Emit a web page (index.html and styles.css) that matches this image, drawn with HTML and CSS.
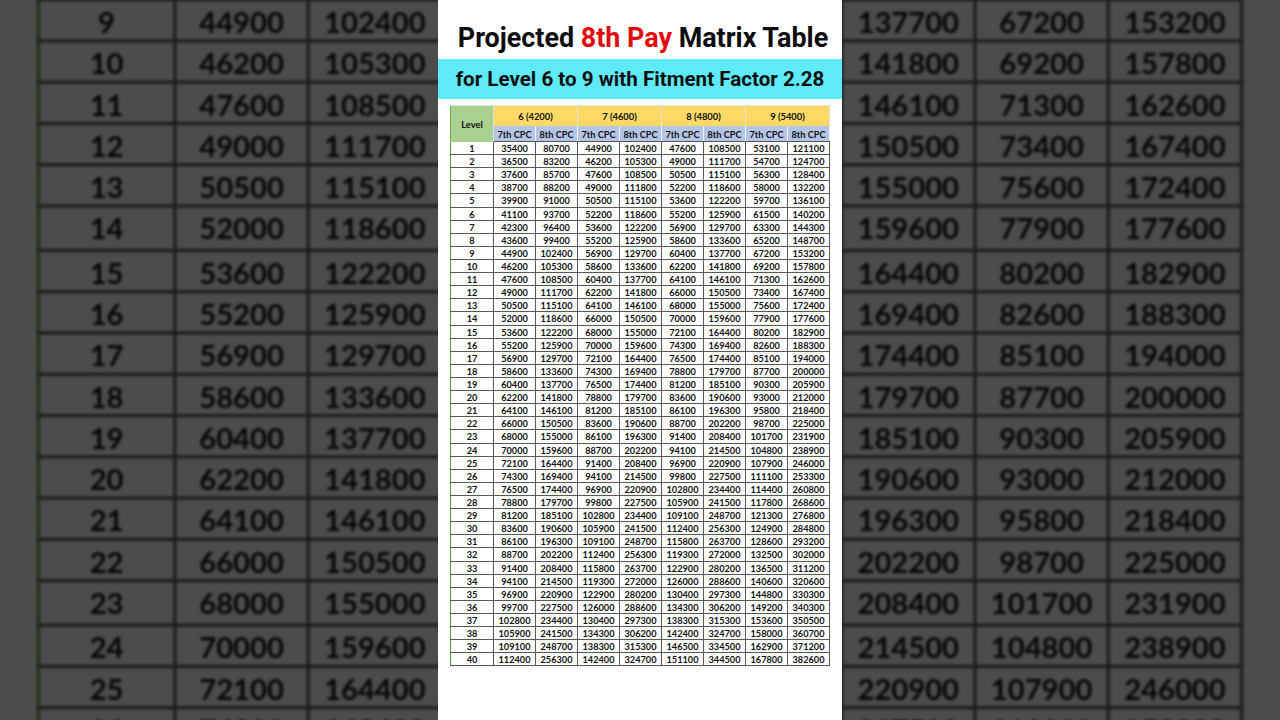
FILE: index.html
```html
<!DOCTYPE html>
<html lang="en">
<head>
<meta charset="utf-8">
<title>Projected 8th Pay Matrix Table</title>
<link rel="stylesheet" href="styles.css">
</head>
<body>
<div class="backdrop" aria-hidden="true"></div>
<main class="panel">
  <h1 class="title">Projected <span class="accent">8th Pay</span> Matrix Table</h1>
  <p class="band">for Level 6 to 9 with Fitment Factor 2.28</p>
  <table class="matrix">
    <colgroup><col class="c-level"><col><col><col><col><col><col><col><col></colgroup>
    <thead>
      <tr class="h1">
        <th rowspan="2" class="lvl-head">Level</th>
        <th colspan="2">6 (4200)</th>
        <th colspan="2">7 (4600)</th>
        <th colspan="2">8 (4800)</th>
        <th colspan="2">9 (5400)</th>
      </tr>
      <tr class="h2">
        <th>7th CPC</th><th>8th CPC</th>
        <th>7th CPC</th><th>8th CPC</th>
        <th>7th CPC</th><th>8th CPC</th>
        <th>7th CPC</th><th>8th CPC</th>
      </tr>
    </thead>
    <tbody>
      <tr><td>1</td><td>35400</td><td>80700</td><td>44900</td><td>102400</td><td>47600</td><td>108500</td><td>53100</td><td>121100</td></tr>
      <tr><td>2</td><td>36500</td><td>83200</td><td>46200</td><td>105300</td><td>49000</td><td>111700</td><td>54700</td><td>124700</td></tr>
      <tr><td>3</td><td>37600</td><td>85700</td><td>47600</td><td>108500</td><td>50500</td><td>115100</td><td>56300</td><td>128400</td></tr>
      <tr><td>4</td><td>38700</td><td>88200</td><td>49000</td><td>111800</td><td>52200</td><td>118600</td><td>58000</td><td>132200</td></tr>
      <tr><td>5</td><td>39900</td><td>91000</td><td>50500</td><td>115100</td><td>53600</td><td>122200</td><td>59700</td><td>136100</td></tr>
      <tr><td>6</td><td>41100</td><td>93700</td><td>52200</td><td>118600</td><td>55200</td><td>125900</td><td>61500</td><td>140200</td></tr>
      <tr><td>7</td><td>42300</td><td>96400</td><td>53600</td><td>122200</td><td>56900</td><td>129700</td><td>63300</td><td>144300</td></tr>
      <tr><td>8</td><td>43600</td><td>99400</td><td>55200</td><td>125900</td><td>58600</td><td>133600</td><td>65200</td><td>148700</td></tr>
      <tr><td>9</td><td>44900</td><td>102400</td><td>56900</td><td>129700</td><td>60400</td><td>137700</td><td>67200</td><td>153200</td></tr>
      <tr><td>10</td><td>46200</td><td>105300</td><td>58600</td><td>133600</td><td>62200</td><td>141800</td><td>69200</td><td>157800</td></tr>
      <tr><td>11</td><td>47600</td><td>108500</td><td>60400</td><td>137700</td><td>64100</td><td>146100</td><td>71300</td><td>162600</td></tr>
      <tr><td>12</td><td>49000</td><td>111700</td><td>62200</td><td>141800</td><td>66000</td><td>150500</td><td>73400</td><td>167400</td></tr>
      <tr><td>13</td><td>50500</td><td>115100</td><td>64100</td><td>146100</td><td>68000</td><td>155000</td><td>75600</td><td>172400</td></tr>
      <tr><td>14</td><td>52000</td><td>118600</td><td>66000</td><td>150500</td><td>70000</td><td>159600</td><td>77900</td><td>177600</td></tr>
      <tr><td>15</td><td>53600</td><td>122200</td><td>68000</td><td>155000</td><td>72100</td><td>164400</td><td>80200</td><td>182900</td></tr>
      <tr><td>16</td><td>55200</td><td>125900</td><td>70000</td><td>159600</td><td>74300</td><td>169400</td><td>82600</td><td>188300</td></tr>
      <tr><td>17</td><td>56900</td><td>129700</td><td>72100</td><td>164400</td><td>76500</td><td>174400</td><td>85100</td><td>194000</td></tr>
      <tr><td>18</td><td>58600</td><td>133600</td><td>74300</td><td>169400</td><td>78800</td><td>179700</td><td>87700</td><td>200000</td></tr>
      <tr><td>19</td><td>60400</td><td>137700</td><td>76500</td><td>174400</td><td>81200</td><td>185100</td><td>90300</td><td>205900</td></tr>
      <tr><td>20</td><td>62200</td><td>141800</td><td>78800</td><td>179700</td><td>83600</td><td>190600</td><td>93000</td><td>212000</td></tr>
      <tr><td>21</td><td>64100</td><td>146100</td><td>81200</td><td>185100</td><td>86100</td><td>196300</td><td>95800</td><td>218400</td></tr>
      <tr><td>22</td><td>66000</td><td>150500</td><td>83600</td><td>190600</td><td>88700</td><td>202200</td><td>98700</td><td>225000</td></tr>
      <tr><td>23</td><td>68000</td><td>155000</td><td>86100</td><td>196300</td><td>91400</td><td>208400</td><td>101700</td><td>231900</td></tr>
      <tr><td>24</td><td>70000</td><td>159600</td><td>88700</td><td>202200</td><td>94100</td><td>214500</td><td>104800</td><td>238900</td></tr>
      <tr><td>25</td><td>72100</td><td>164400</td><td>91400</td><td>208400</td><td>96900</td><td>220900</td><td>107900</td><td>246000</td></tr>
      <tr><td>26</td><td>74300</td><td>169400</td><td>94100</td><td>214500</td><td>99800</td><td>227500</td><td>111100</td><td>253300</td></tr>
      <tr><td>27</td><td>76500</td><td>174400</td><td>96900</td><td>220900</td><td>102800</td><td>234400</td><td>114400</td><td>260800</td></tr>
      <tr><td>28</td><td>78800</td><td>179700</td><td>99800</td><td>227500</td><td>105900</td><td>241500</td><td>117800</td><td>268600</td></tr>
      <tr><td>29</td><td>81200</td><td>185100</td><td>102800</td><td>234400</td><td>109100</td><td>248700</td><td>121300</td><td>276800</td></tr>
      <tr><td>30</td><td>83600</td><td>190600</td><td>105900</td><td>241500</td><td>112400</td><td>256300</td><td>124900</td><td>284800</td></tr>
      <tr><td>31</td><td>86100</td><td>196300</td><td>109100</td><td>248700</td><td>115800</td><td>263700</td><td>128600</td><td>293200</td></tr>
      <tr><td>32</td><td>88700</td><td>202200</td><td>112400</td><td>256300</td><td>119300</td><td>272000</td><td>132500</td><td>302000</td></tr>
      <tr><td>33</td><td>91400</td><td>208400</td><td>115800</td><td>263700</td><td>122900</td><td>280200</td><td>136500</td><td>311200</td></tr>
      <tr><td>34</td><td>94100</td><td>214500</td><td>119300</td><td>272000</td><td>126000</td><td>288600</td><td>140600</td><td>320600</td></tr>
      <tr><td>35</td><td>96900</td><td>220900</td><td>122900</td><td>280200</td><td>130400</td><td>297300</td><td>144800</td><td>330300</td></tr>
      <tr><td>36</td><td>99700</td><td>227500</td><td>126000</td><td>288600</td><td>134300</td><td>306200</td><td>149200</td><td>340300</td></tr>
      <tr><td>37</td><td>102800</td><td>234400</td><td>130400</td><td>297300</td><td>138300</td><td>315300</td><td>153600</td><td>350500</td></tr>
      <tr><td>38</td><td>105900</td><td>241500</td><td>134300</td><td>306200</td><td>142400</td><td>324700</td><td>158000</td><td>360700</td></tr>
      <tr><td>39</td><td>109100</td><td>248700</td><td>138300</td><td>315300</td><td>146500</td><td>334500</td><td>162900</td><td>371200</td></tr>
      <tr><td>40</td><td>112400</td><td>256300</td><td>142400</td><td>324700</td><td>151100</td><td>344500</td><td>167800</td><td>382600</td></tr>
    </tbody>
  </table>
</main>
<script src="script.js"></script>
</body>
</html>
```

FILE: styles.css
```css
* { box-sizing: border-box; }

html, body {
  margin: 0;
  height: 720px;
  overflow: hidden;
}

body {
  background: #4b4b4b;
  display: flex;
  justify-content: center;
  font-family: Roboto, "Liberation Sans", sans-serif;
}

/* enlarged, dimmed copy of the panel behind it */
.backdrop {
  position: absolute;
  inset: 0;
  overflow: hidden;
  display: flex;
  justify-content: center;
  pointer-events: none;
}

.backdrop .panel {
  transform: scale(3.175);
  transform-origin: 202px 360px;
  filter: brightness(0.3) blur(0.45px);
}

.panel {
  position: relative;
  width: 404px;
  height: 720px;
  background: #ffffff;
  display: flex;
  flex-direction: column;
  align-items: center;
}

.title {
  margin: 22px 0 5px 6px;
  font-size: 26.9px;
  line-height: 32px;
  font-weight: 700;
  color: #0c0c0c;
  white-space: nowrap;
}

.accent { color: #e10b0b; }

.band {
  margin: 0;
  width: 100%;
  height: 40px;
  background: #5eeaf8;
  font-size: 20.6px;
  line-height: 40px;
  font-weight: 700;
  color: #111;
  text-align: center;
  white-space: nowrap;
}

.matrix {
  margin: 6px 0 0 0;
  width: 379px;
  table-layout: fixed;
  border-collapse: collapse;
  font-family: Lato, "Open Sans", sans-serif;
  font-weight: 700;
  font-size: 9.2px;
  color: #111;
  text-align: center;
}

.matrix col { width: 42px; }
.matrix col.c-level { width: 43px; }

.matrix th {
  font-weight: 700;
  padding: 0;
  border: 1px solid #e2e2e2;
}

.matrix .h1 th {
  height: 20px;
  padding-top: 1px;
  background: #ffd966;
  border-bottom-color: #ffd966;
  font-size: 9.4px;
}

.matrix .h1 th.lvl-head {
  background: #a9d08e;
  border-left: 1px solid #70ad47;
  border-bottom: 1px solid #a9d08e;
}

.matrix .h2 th {
  height: 16px;
  padding-top: 1px;
  background: #b4c6e7;
  border-color: #eef1f8;
  border-bottom: 1px solid #555;
}

.matrix td {
  height: 13.12px;
  padding: 2px 0 0;
  line-height: 10px;
  border: 1px solid #595959;
}

.matrix td:first-child {
  border-left-color: #5b9a3b;
}
```

FILE: script.js
```js
(function () {
  var panel = document.querySelector('.panel');
  var backdrop = document.querySelector('.backdrop');
  if (panel && backdrop) {
    var copy = panel.cloneNode(true);
    backdrop.appendChild(copy);
  }
})();
```
